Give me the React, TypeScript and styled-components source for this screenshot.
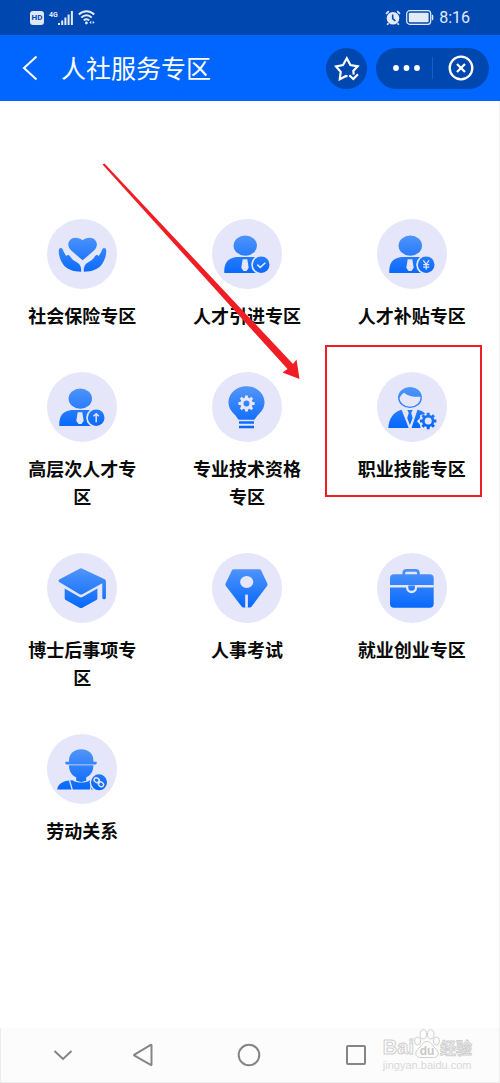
import React from "react";
import styled, { createGlobalStyle } from "styled-components";

const GlobalStyle = createGlobalStyle`
  * { box-sizing: border-box; }
  body {
    margin: 0;
    background: #fff;
    font-family: "Noto Sans CJK SC", sans-serif;
  }
  svg { display: block; flex-shrink: 0; }
`;

const Screen = styled.div`
  display: flex;
  flex-direction: column;
  min-height: 100vh;
`;

const StatusBar = styled.div`
  display: flex;
  align-items: center;
  justify-content: space-between;
  height: 35px;
  padding: 0 30px;
  background: #0047b0;
  color: #e3ebf7;
`;

const StatusGroup = styled.div`
  display: flex;
  align-items: center;
  gap: 5px;
`;

const HdBadge = styled.span`
  width: 14px;
  height: 14px;
  border-radius: 3px;
  background: #dfe7f5;
  color: #0047b0;
  font: 700 8px/14px Roboto, sans-serif;
  text-align: center;
`;

const Signal = styled.span`
  display: flex;
  align-items: flex-start;
`;

const Network = styled.span`
  font: 700 7px/8px Roboto, sans-serif;
`;

const Clock = styled.time`
  font: 400 16px/20px Roboto, sans-serif;
`;

const Header = styled.header`
  display: flex;
  align-items: center;
  height: 66px;
  padding: 0 11px 0 20px;
  background: #0066ff;
  color: #fff;
`;

const IconButton = styled.button<{ $width?: number }>`
  display: flex;
  align-items: center;
  justify-content: center;
  width: ${(p) => (p.$width ? `${p.$width}px` : "auto")};
  height: 41px;
  padding: 0;
  border: 0;
  background: none;
  color: inherit;
`;

const Title = styled.h1`
  flex: 1;
  margin: 0 0 2px 21px;
  font-size: 25px;
  line-height: 36px;
  font-weight: 400;
`;

const FavoriteButton = styled(IconButton)`
  border-radius: 50%;
  background: #0047b0;
`;

const Capsule = styled.div`
  display: flex;
  align-items: center;
  margin-left: 9px;
  border-radius: 21px;
  background: #0047b0;
`;

const Divider = styled.span`
  width: 1px;
  height: 22px;
  background: #1c5dbd;
`;

const Main = styled.main`
  position: relative;
  flex: 1;
  padding: 118px 5px 42px 0;
  border: solid #f0f0f0;
  border-width: 0 1px 0 0;
`;

const Grid = styled.nav`
  display: grid;
  grid-template-columns: repeat(3, 1fr);
  align-items: start;
  row-gap: 43px;
`;

const Tile = styled.a`
  position: relative;
  display: flex;
  flex-direction: column;
  align-items: center;
  gap: 12px;
  color: #0a0a0a;
  text-decoration: none;
`;

const IconDisc = styled.span`
  width: 70px;
  height: 70px;
  border-radius: 50%;
  background: #e5e6f9;
`;

const TileLabel = styled.span`
  width: 110px;
  font-size: 18px;
  line-height: 28px;
  font-weight: 700;
  text-align: center;
`;

const Highlight = styled.span`
  position: absolute;
  top: -27px;
  bottom: -15px;
  left: 50%;
  width: 157px;
  margin-left: -87px;
  border: 2px solid #f01d25;
`;

const Arrow = styled.svg`
  position: absolute;
  top: 61px;
  left: 101px;
  pointer-events: none;
`;

const NavBar = styled.footer`
  position: relative;
  display: flex;
  align-items: center;
  height: 55px;
  padding: 0 18% 0 7%;
  border: solid #ececec;
  border-width: 0 1px 1px;
  background: #fcfcfc;
  color: #858585;
`;

const NavButton = styled(IconButton)<{ $grow: number }>`
  flex: ${(p) => p.$grow} 1 0;
`;

const Watermark = styled.div`
  position: absolute;
  right: 27px;
  bottom: 10px;
  display: flex;
  flex-direction: column;
  color: #fdfdfd;
`;

const WatermarkBrand = styled.div`
  display: flex;
  align-items: flex-end;
  height: 30px;
  font: 700 20px/24px "Liberation Sans", sans-serif;
  -webkit-text-stroke: 1px #d0d0d0;
`;

const WatermarkWord = styled.span`
  font: 700 16px/24px "Noto Sans CJK SC", sans-serif;
  color: #f4f4f4;
`;

const WatermarkUrl = styled.span`
  color: #d8d8d8;
  font: 400 11px/13px "Liberation Sans", sans-serif;
`;

const BLUE = "url(#icon-blue)";
const PALE = "#e5e6f9";

function gearPath(cx: number, cy: number, outer: number, inner: number, teeth = 8) {
  const points: string[] = [];
  const step = (Math.PI * 2) / teeth;
  for (let i = 0; i < teeth; i++) {
    const a = i * step - Math.PI / 2;
    [
      [-0.32, inner],
      [-0.22, outer],
      [0.22, outer],
      [0.32, inner],
    ].forEach(([t, r]) => {
      points.push(`${(cx + r * Math.cos(a + t * step)).toFixed(2)} ${(cy + r * Math.sin(a + t * step)).toFixed(2)}`);
    });
  }
  return `M${points.join("L")}Z`;
}

function TileIcon({ children }: { children: React.ReactNode }) {
  return (
    <svg width="70" height="70" viewBox="0 0 70 70" fill={BLUE} aria-hidden="true">
      {children}
    </svg>
  );
}

function PersonIcon({ children }: { children: React.ReactNode }) {
  return (
    <TileIcon>
      <ellipse cx="33.3" cy="26.6" rx="11.7" ry="10.2" />
      <path d="M12.2 53.2c0-9 3-13.8 12-15.2h18c6 .8 9 3 10.500 7.500V54H13.500c-.9 0-1.300-.2-1.300-.8z" />
      <path d="M30.700 40.300h4.600l.2 1.200 1.200 7.300-2.200 3.200h-3l-2.200-3.200 1.200-7.300z" fill={PALE} />
      <circle cx="49.200" cy="45.700" r="10" fill={PALE} />
      <circle cx="49.200" cy="45.700" r="8.300" />
      <g fill="none" stroke={PALE} strokeWidth="1.500">
        {children}
      </g>
    </TileIcon>
  );
}

const handPath =
  "M11.800 31.300c.3-2.700 3-3 4.100-.5.9 2.400 2 4.400 3.600 6.400.5-1.700 2.600-1.600 4 .7 1.200 2 2.600 3.200 5 4.600 4.600 2.700 5.800 4.500 5.700 10.200-8.200-.1-14.500-2.200-18.300-7.700-3-4.500-4.300-9.300-4.100-13.700z";

const icons: Record<string, React.ReactNode> = {
  care: (
    <TileIcon>
      <path d="M35.600 41.300 24.200 31.600c-5.500-5-2.500-12.800 4.300-12.900 3 0 5.200 1 7.100 2.600 1.900-1.600 4.100-2.600 7.100-2.600 6.800.1 9.800 7.900 4.300 12.900z" />
      <path d={handPath} />
      <path d={handPath} transform="matrix(-1 0 0 1 71 0)" />
    </TileIcon>
  ),
  check: (
    <PersonIcon>
      <path d="m45.300 45.600 2.900 2.800 5.200-4.700" />
    </PersonIcon>
  ),
  yen: (
    <PersonIcon>
      <path d="m46.300 41.300 2.900 4 2.900-4M49.200 45.300v5.400M46.200 45.700h6M46.200 48.200h6" strokeWidth="1.200" />
    </PersonIcon>
  ),
  up: (
    <PersonIcon>
      <path d="M49.200 50.200v-8M46.500 44.200l2.700-2.500 2.700 2.500" />
    </PersonIcon>
  ),
  bulb: (
    <TileIcon>
      <path d="M34.500 14.300c10.200 0 18 7 18 16 0 6.500-3.800 10-7 13.200-2 2-2.200 4-3.700 4.300H27c-1.300-.4-1.700-2.300-3.500-4.300-3.200-3.300-7-6.700-7-13.200 0-9 7.800-16 18-16z" />
      <path d="M27 49.200h15v2.600H27zM27 53.700h15v2.600H27z" />
      <path d={gearPath(34.5, 31.5, 8.2, 6.2)} fill={PALE} />
      <circle cx="34.500" cy="31.500" r="2.900" />
    </TileIcon>
  ),
  skill: (
    <TileIcon>
      <ellipse cx="33" cy="25.700" rx="11.200" ry="9.700" fill="none" stroke={BLUE} strokeWidth="1.400" />
      <path d="M21.500 27c1.500-1.500 2.500-4.500 5.500-6.300 4.500 3.700 10 4.300 17.400 4C44 19 39.500 15.200 33 15.200S20.700 20 21.500 27z" />
      <path d="M11.300 56c.5-9.200 4.900-16.100 13.300-18.300L31.700 56z" />
      <path d="M30.300 38h5.400l-1.500 3 1.400 5-2.700 7-2.700-7 1.500-5z" />
      <path d="m34.500 56 6-18.300c3.700.8 6 2 7.900 4.300l-5.200 1-.3 3.300-3 3 3 3.200.7 3.500z" />
      <path
        fillRule="evenodd"
        d={`${gearPath(51.2, 49, 8.3, 6.2)}M47.700 49a3.500 3.500 0 1 0 7 0a3.500 3.500 0 1 0-7 0z`}
      />
    </TileIcon>
  ),
  cap: (
    <TileIcon>
      <path d="M32.600 15.700q1.400-.7 2.800 0l22.300 10.500q1.200.6 1.200 2v16.600q0 1.500-1.800 1.500t-1.800-1.500V30.200L35.400 41.200q-1.400.7-2.800 0L12.200 29q-1.600-1.200 0-2.400z" />
      <path d="M17.700 35.500 32.600 44q1.400.8 2.800 0l15-8.500v9.800q0 1-1 1.600L35.400 54.700q-1.400.7-2.800 0l-13.900-7.800q-1-.6-1-1.600z" />
    </TileIcon>
  ),
  pen: (
    <TileIcon>
      <path d="M21.800 16.300h25.400q1.400 0 2 1.300l6 12.600q.7 1.400-.2 2.700L39.800 53.300q-.9 1.200-2.200 1.200h-6q-1.300 0-2.200-1.200L13.900 32.900q-.9-1.300-.2-2.700l6.100-12.600q.6-1.300 2-1.300z" />
      <ellipse cx="34.700" cy="29" rx="6.600" ry="6" fill={PALE} />
      <path d="M33.200 41.600h2.700v13.200h-2.700z" fill={PALE} />
    </TileIcon>
  ),
  case: (
    <TileIcon>
      <path
        d="M26.800 22v-1.800q0-2.800 3-2.800h8.600q3 0 3 2.800V22"
        fill="none"
        stroke="#4a8ff9"
        strokeWidth="2.800"
      />
      <rect x="13" y="21.300" width="43.700" height="33.400" rx="4" />
      <path d="M13 32h43.700v2.600H40.200a5.600 5.600 0 0 1-11.200 0H13z" fill={PALE} />
      <path d="M31.300 32.500h6.600v2a3.300 3.300 0 0 1-6.600 0z" />
    </TileIcon>
  ),
  worker: (
    <TileIcon>
      <path d="M22 28.500v-2.300c0-6.500 5.400-10.900 12.200-10.900s12.200 4.400 12.200 10.900v2.300z" />
      <path d="M18.300 27.700h31.400v1.200q0 1.500-1.500 1.500H19.800q-1.500 0-1.500-1.500z" />
      <path d="M22 31.200h24.400c0 6-2.700 10-7.200 12v3.500l-5 1.300-5-1.300v-3.500c-4.500-2-7.200-6-7.200-12z" />
      <path d="M10.200 55.400c.5-5 5.200-8.500 12.800-9.200h2.600c2.500 1.800 5.600 2.400 8.600 2.400s6.100-.6 8.600-2.400h3l1 9.200z" />
      <path d="m22.300 45.500 3 10.500M45 45.500 43.500 56" stroke={PALE} strokeWidth="1.300" />
      <circle cx="52" cy="48.300" r="9.300" fill={PALE} />
      <circle cx="52" cy="48.300" r="8" />
      <g fill="none" stroke={PALE} strokeWidth="1.400">
        <ellipse cx="49.700" cy="46.200" rx="2.700" ry="2.200" transform="rotate(35 49.700 46.200)" />
        <ellipse cx="54" cy="50.300" rx="2.700" ry="2.200" transform="rotate(35 54 50.300)" />
        <path d="m50.800 47.200 2.200 2.100" />
      </g>
    </TileIcon>
  ),
};

const services = [
  { label: "社会保险专区", icon: "care" },
  { label: "人才引进专区", icon: "check" },
  { label: "人才补贴专区", icon: "yen" },
  { label: "高层次人才专区", icon: "up" },
  { label: "专业技术资格专区", icon: "bulb" },
  { label: "职业技能专区", icon: "skill", highlighted: true },
  { label: "博士后事项专区", icon: "cap" },
  { label: "人事考试", icon: "pen" },
  { label: "就业创业专区", icon: "case" },
  { label: "劳动关系", icon: "worker" },
];

const HiddenSvg = styled.svg`
  position: absolute;
`;

function GradientDefs() {
  return (
    <HiddenSvg width="0" height="0" aria-hidden="true">
      <defs>
        <linearGradient id="icon-blue" gradientUnits="userSpaceOnUse" x1="0" y1="16" x2="0" y2="55">
          <stop offset="0" stopColor="#4f94fa" />
          <stop offset="1" stopColor="#0768fd" />
        </linearGradient>
      </defs>
    </HiddenSvg>
  );
}

export default function App() {
  return (
    <Screen>
      <GlobalStyle />
      <GradientDefs />
      <StatusBar>
        <StatusGroup>
          <HdBadge>HD</HdBadge>
          <Signal>
            <Network>4G</Network>
            <svg width="15" height="14" viewBox="0 0 15 14" fill="currentColor">
              <path d="M0 12h2v2H0zM3.200 9.500h2V14h-2zM6.400 6.500h2V14h-2zM9.600 3.500h2V14h-2zM12.900 0h2v14h-2z" />
            </svg>
          </Signal>
          <svg width="18" height="15" viewBox="0 0 18 15" fill="none" stroke="currentColor" strokeWidth="2">
            <path d="M.8 4.500c4.500-4.400 11-4.400 15.400 0M3.300 7.600c3-3 7.400-3 10.400 0M5.800 10.400c1.600-1.600 3.900-1.600 5.400 0" />
            <circle cx="8.400" cy="13" r="1.400" fill="currentColor" stroke="none" />
            <path d="m13.200 10.800-1.800 1.600 1.800 1.600zM14.700 10.800l1.800 1.600-1.800 1.600z" fill="currentColor" stroke="none" />
          </svg>
        </StatusGroup>
        <StatusGroup>
          <svg width="16" height="16" viewBox="0 0 16 16" fill="currentColor">
            <circle cx="8" cy="8.300" r="6.300" />
            <path
              d="M1 3.800 3.800 1.200M15 3.800l-2.800-2.600M3.500 13.200l-1.300 1.500M12.500 13.200l1.300 1.500"
              stroke="currentColor"
              strokeWidth="1.700"
              fill="none"
            />
            <path d="M7.700 4.500v4.200l2.700 2.300" stroke="#0047b0" strokeWidth="1.600" fill="none" />
          </svg>
          <svg width="28" height="15" viewBox="0 0 28 15">
            <rect x=".7" y=".7" width="24" height="13.600" rx="3" fill="none" stroke="currentColor" strokeWidth="1.200" />
            <rect x="2.800" y="2.800" width="19.800" height="9.400" rx="1" fill="currentColor" />
            <path d="M25.800 4.500q1.500.2 1.500 1.500v3q0 1.300-1.500 1.500z" fill="currentColor" />
          </svg>
          <Clock>8:16</Clock>
        </StatusGroup>
      </StatusBar>

      <Header>
        <IconButton $width={20} aria-label="返回">
          <svg width="16" height="26" viewBox="0 0 16 26" fill="none" stroke="currentColor" strokeWidth="2">
            <path d="M14.500 1.500 2 13l12.500 11.500" />
          </svg>
        </IconButton>
        <Title>人社服务专区</Title>
        <FavoriteButton $width={41} aria-label="收藏">
          <svg width="26" height="26" viewBox="0 0 26 26" fill="none" stroke="currentColor" strokeWidth="2.200">
            <path d="m13.500 21.500-1.500-.5-6.200 3.200.9-7.300L2 11.400l7-1.400 3.800-6.700 3.600 6.700 7.200 1.300-4.300 4.600.4 3.700" />
            <path d="m15.300 20.300 4 3.700 4.700-4.700" />
          </svg>
        </FavoriteButton>
        <Capsule>
          <IconButton $width={56} aria-label="更多">
            <svg width="34" height="8" viewBox="0 0 34 8" fill="currentColor">
              <circle cx="9" cy="4" r="2.900" />
              <circle cx="19.500" cy="4" r="2.900" />
              <circle cx="30" cy="4" r="2.900" />
            </svg>
          </IconButton>
          <Divider />
          <IconButton $width={56} aria-label="关闭">
            <svg width="26" height="26" viewBox="0 0 26 26" fill="none" stroke="currentColor" strokeWidth="2.300">
              <circle cx="13" cy="13" r="11.300" />
              <path d="m9 9 8 8M17 9l-8 8" />
            </svg>
          </IconButton>
        </Capsule>
      </Header>

      <Main>
        <Grid>
          {services.map((s) => (
            <Tile key={s.label} href="#">
              <IconDisc>{icons[s.icon]}</IconDisc>
              <TileLabel>{s.label}</TileLabel>
              {s.highlighted && <Highlight />}
            </Tile>
          ))}
        </Grid>
        <Arrow width="202" height="220" viewBox="0 0 202 220" fill="#f01d25" aria-hidden="true">
          <path d="M1.500 2.500 3.500 1.500 192 202l3.500-4.500L198.500 217l-17-6.500 5-3.500z" />
        </Arrow>
      </Main>

      <NavBar>
        <NavButton $grow={1} aria-label="收起">
          <svg width="20" height="12" viewBox="0 0 20 12" fill="none" stroke="currentColor" strokeWidth="2">
            <path d="m1.500 2 8.500 8 8.500-8" />
          </svg>
        </NavButton>
        <NavButton $grow={2} aria-label="后退">
          <svg width="22" height="24" viewBox="0 0 22 24" fill="none" stroke="currentColor" strokeWidth="2">
            <path d="M19.500 2.500v19q0 .8-.8.400L2.500 12.700q-.8-.5 0-1L18.700 2q.8-.4.8.500z" />
          </svg>
        </NavButton>
        <NavButton $grow={2} aria-label="主页">
          <svg width="24" height="24" viewBox="0 0 24 24" fill="none" stroke="currentColor" strokeWidth="2">
            <circle cx="12" cy="12" r="10.300" />
          </svg>
        </NavButton>
        <NavButton $grow={2} aria-label="最近任务">
          <svg width="22" height="22" viewBox="0 0 22 22" fill="none" stroke="currentColor" strokeWidth="2">
            <rect x="2" y="2" width="18" height="18" rx="1" />
          </svg>
        </NavButton>
        <Watermark>
          <WatermarkBrand>
            <span>Bai</span>
            <svg width="26" height="30" viewBox="0 0 26 30" fill="#fdfdfd" stroke="#d0d0d0" strokeWidth="1">
              <ellipse cx="3.600" cy="12" rx="3" ry="4" />
              <ellipse cx="9.300" cy="5.300" rx="3.200" ry="4.600" />
              <ellipse cx="16.700" cy="5.300" rx="3.200" ry="4.600" />
              <ellipse cx="22.400" cy="12" rx="3" ry="4" />
              <path d="M13 12.500c4 0 5 4 8 6.500 5 4 4 9.500-1.500 9.500h-13C1 28.500 0 23 5 19c3-2.500 4-6.500 8-6.500z" />
              <text
                x="13"
                y="26"
                textAnchor="middle"
                fontFamily="Liberation Sans, sans-serif"
                fontSize="12"
                fontWeight="700"
                fill="#c8c8c8"
                stroke="none"
              >
                du
              </text>
            </svg>
            <WatermarkWord>经验</WatermarkWord>
          </WatermarkBrand>
          <WatermarkUrl>jingyan.baidu.com</WatermarkUrl>
        </Watermark>
      </NavBar>
    </Screen>
  );
}
